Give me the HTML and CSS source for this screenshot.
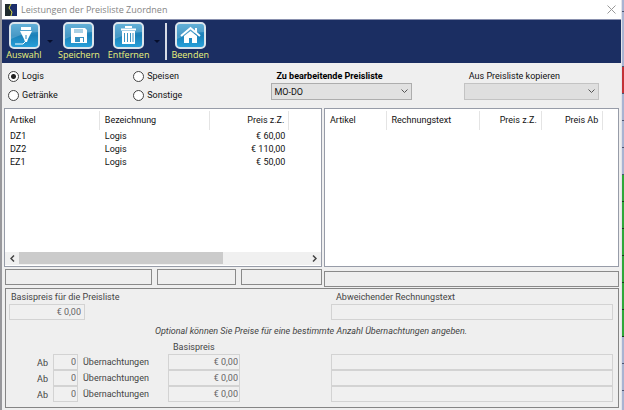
FILE: index.html
```html
<!DOCTYPE html>
<html lang="de">
<head>
<meta charset="utf-8">
<title>Leistungen der Preisliste Zuordnen</title>
<link rel="stylesheet" href="styles.css">
</head>
<body>
<svg class="defs" width="0" height="0" aria-hidden="true">
  <defs>
    <linearGradient id="tile" x1="0" y1="0" x2="0" y2="1">
      <stop offset="0" stop-color="#3f9fd0"/>
      <stop offset="0.5" stop-color="#1b80b8"/>
      <stop offset="1" stop-color="#28a3dc"/>
    </linearGradient>
    <g id="tile-base">
      <rect x="1" y="1" width="29" height="25" rx="4" fill="url(#tile)"/>
      <path d="M2 17V5Q2 2 5 2H26Q29 2 29 5V10Q14 11 2 17Z" fill="#fff" opacity="0.2"/>
      <rect x="1" y="1" width="29" height="25" rx="4" fill="none" stroke="#dbe5ec" stroke-width="2"/>
    </g>
  </defs>
</svg>
<div class="screen">
  <main class="window">
    <header class="titlebar">
      <svg class="app-icon" width="12" height="12" viewBox="0 0 12 12" aria-hidden="true">
        <rect width="12" height="12" fill="#1d2f6b"/>
        <path d="M0 0H6L4 4L7 8L6 12H0Z" fill="#202b2e"/>
        <path d="M6 0L4 4L7 8L6 12" fill="none" stroke="#d6d94b"/>
      </svg>
      <h1>Leistungen der Preisliste Zuordnen</h1>
      <button class="close" type="button" aria-label="Schließen">
        <svg width="9" height="9" viewBox="0 0 9 9"><path d="M0.5 0.5L8.5 8.5M8.5 0.5L0.5 8.5" stroke="#999" fill="none"/></svg>
      </button>
    </header>

    <nav class="toolbar">
      <button class="tool" type="button">
        <svg width="31" height="27" viewBox="0 0 31 27"><use href="#tile-base"/><path d="M12 5H22V8H12ZM11 9H23L19 17L18 20H16L15 17Z" fill="#fff"/><path d="M17 13V17" stroke="#2784b8"/><path d="M6 22H14L16 20" stroke="#fff" fill="none"/></svg>
        <span>Auswahl</span>
      </button>
      <i class="drop"></i>
      <button class="tool" type="button">
        <svg width="31" height="27" viewBox="0 0 31 27"><use href="#tile-base"/><path d="M8 6H22L24 8V21H8Z" fill="#fff"/><path d="M11 7H20V11H11Z" fill="#a9d0e4"/><path d="M12 15H21V20H12Z" fill="#3992c2"/><path d="M17 16H20V20H17Z" fill="#fff"/></svg>
        <span>Speichern</span>
      </button>
      <button class="tool" type="button">
        <svg width="31" height="27" viewBox="0 0 31 27"><use href="#tile-base"/><path d="M8 7.500H23M13 6V5H18V6" stroke="#fff" stroke-width="2" fill="none"/><path d="M9 9H22V22H9Z" fill="#fff"/><path d="M11.500 11V20M14.500 11V20M17.500 11V20M20 11V20" stroke="#3992c2"/></svg>
        <span>Entfernen</span>
      </button>
      <i class="drop"></i>
      <i class="divider"></i>
      <button class="tool" type="button">
        <svg width="31" height="27" viewBox="0 0 31 27"><use href="#tile-base"/><path d="M6 14L15.500 6L25 14" stroke="#fff" stroke-width="2" fill="none"/><path d="M20 6H22V11L20 9Z" fill="#fff"/><path d="M9 14L15.500 9L22 14V21H17V16H14V21H9Z" fill="#fff"/></svg>
        <span>Beenden</span>
      </button>
    </nav>

    <section class="options">
      <div class="radios">
        <label><input type="radio" name="art" checked>Logis</label>
        <label><input type="radio" name="art">Speisen</label>
        <label><input type="radio" name="art">Getränke</label>
        <label><input type="radio" name="art">Sonstige</label>
      </div>
      <div class="choice">
        <label class="strong" for="edit-list">Zu bearbeitende Preisliste</label>
        <select id="edit-list"><option>MO-DO</option></select>
      </div>
      <div class="choice">
        <label for="copy-list">Aus Preisliste kopieren</label>
        <select id="copy-list"><option></option></select>
      </div>
    </section>

    <section class="lists">
      <div class="column">
        <div class="list">
          <table>
            <colgroup><col class="w-30"><col class="w-35"><col class="w-25"><col></colgroup>
            <thead><tr><th>Artikel</th><th>Bezeichnung</th><th class="num">Preis z.Z.</th><th></th></tr></thead>
            <tbody>
              <tr><td>DZ1</td><td>Logis</td><td class="num">€ 60,00</td><td></td></tr>
              <tr><td>DZ2</td><td>Logis</td><td class="num">€ 110,00</td><td></td></tr>
              <tr><td>EZ1</td><td>Logis</td><td class="num">€ 50,00</td><td></td></tr>
            </tbody>
          </table>
          <div class="scrollbar">
            <button type="button" aria-label="Nach links"><svg width="5" height="7" viewBox="0 0 5 7"><path d="M4 0.500L1 3.500L4 6.500" fill="none" stroke="#444" stroke-width="1.500"/></svg></button>
            <div class="track"><div class="thumb"></div></div>
            <button type="button" aria-label="Nach rechts"><svg width="5" height="7" viewBox="0 0 5 7"><path d="M1 0.500L4 3.500L1 6.500" fill="none" stroke="#444" stroke-width="1.500"/></svg></button>
          </div>
        </div>
        <div class="status"><div class="box"></div><div class="box"></div><div class="box"></div></div>
      </div>
      <div class="column">
        <div class="list">
          <table>
            <colgroup><col class="w-21"><col class="w-32"><col class="w-21"><col class="w-21"><col></colgroup>
            <thead><tr><th>Artikel</th><th>Rechnungstext</th><th class="num">Preis z.Z.</th><th class="num">Preis Ab</th><th></th></tr></thead>
          </table>
        </div>
        <div class="status low"><div class="box"></div></div>
      </div>
    </section>

    <section class="details">
      <div class="pair">
        <div class="field">
          <label for="base">Basispreis für die Preisliste</label>
          <input id="base" class="price" value="€ 0,00" disabled>
        </div>
        <div class="field">
          <label for="text">Abweichender Rechnungstext</label>
          <input id="text" disabled>
        </div>
      </div>
      <p class="hint">Optional können Sie Preise für eine bestimmte Anzahl Übernachtungen angeben.</p>
      <div class="caption">Basispreis</div>
      <div class="tier">
        <div class="terms"><label for="n1">Ab</label><input id="n1" class="count" value="0" disabled><span>Übernachtungen</span><input class="amount" aria-label="Basispreis 1" value="€ 0,00" disabled></div>
        <input aria-label="Rechnungstext 1" disabled>
      </div>
      <div class="tier">
        <div class="terms"><label for="n2">Ab</label><input id="n2" class="count" value="0" disabled><span>Übernachtungen</span><input class="amount" aria-label="Basispreis 2" value="€ 0,00" disabled></div>
        <input aria-label="Rechnungstext 2" disabled>
      </div>
      <div class="tier">
        <div class="terms"><label for="n3">Ab</label><input id="n3" class="count" value="0" disabled><span>Übernachtungen</span><input class="amount" aria-label="Basispreis 3" value="€ 0,00" disabled></div>
        <input aria-label="Rechnungstext 3" disabled>
      </div>
    </section>
  </main>
  <aside class="backdrop" aria-hidden="true">
    <i></i><i></i><i class="red"></i><i></i><i></i><i></i>
    <i class="green"></i><i class="green"></i><i class="green"></i><i class="green"></i><i class="green"></i><i class="green"></i>
    <i></i><i></i><i></i>
  </aside>
</div>
</body>
</html>
```
FILE: styles.css
```css
* { box-sizing: border-box; }

body {
  margin: 0;
  background: #efefef;
  color: #111;
  font: 9px/12px Roboto, Arial, sans-serif;
}

button, input, select { font: inherit; color: inherit; margin: 0; }
button { border: 0; padding: 0; background: none; }
.defs { position: absolute; }

.screen { display: flex; min-height: 100vh; border-left: 2px solid #98989c; }
.window { flex: 1; min-width: 0; border-right: 1px solid #e4e4ea; }

.titlebar { display: flex; align-items: center; gap: 4px; height: 19px; padding: 0 5px 0 3px; background: #fff; }
.titlebar h1 { flex: 1; margin: 0; font: 9px/12px "Open Sans", sans-serif; color: #858585; }
.close { display: flex; }

.toolbar {
  display: flex;
  align-items: flex-start;
  height: 44px;
  padding: 2px 4px 0;
  border-top: 1px solid #8990ae;
  background: #1b2e62;
}
.tool {
  display: flex;
  flex-direction: column;
  align-items: center;
  min-width: 36px;
  color: #eaf27c;
  font: 9px/12px "Open Sans", sans-serif;
}
.drop { margin: 18px 5px 0; border: 3px solid transparent; border-top-color: #060e2c; border-bottom: 0; }
.tool + .tool { margin-left: 8px; }
.divider { width: 2px; height: 37px; margin: 1px 4px 0 0; background: #d7dbe6; }

.options {
  display: grid;
  grid-template-columns: 263fr 192fr 155fr;
  padding: 7px 2px 7px 6px;
}
.radios { display: grid; grid-template-columns: 125fr 138fr; row-gap: 7px; align-content: start; }
.radios label { display: flex; align-items: center; gap: 3px; }
.radios input {
  appearance: none;
  width: 11px;
  height: 11px;
  border: 1px solid #444;
  border-radius: 50%;
  background: #fff;
}
.radios input:checked { background: radial-gradient(#222 0 2px, #fff 3px); }
.choice { display: flex; flex-direction: column; gap: 1px; }
.choice label { padding-left: 5px; }
.strong { font-weight: bold; color: #000; }
.choice select {
  appearance: none;
  width: 73%;
  height: 17px;
  padding: 0 2px;
  border: 1px solid #adadad;
  border-radius: 0;
  background: #e1e1e1 url("data:image/svg+xml,%3Csvg xmlns='http://www.w3.org/2000/svg' width='7' height='5'%3E%3Cpath d='M0.500 0.500L3.500 3.500L6.500 0.500' fill='none' stroke='%23555'/%3E%3C/svg%3E") no-repeat right 3px center;
}
.choice:last-child select { width: 87%; border-color: #c3c3c3; background-color: #dfdfdf; }

.lists { display: grid; grid-template-columns: 318fr 295fr; gap: 2px; padding: 0 2px; }
.column { min-width: 0; }
.list {
  display: flex;
  flex-direction: column;
  justify-content: space-between;
  height: 159px;
  padding: 2px 0 1px;
  border: 1px solid #979ca8;
  background: #fff;
}
table { width: 100%; table-layout: fixed; border-collapse: separate; border-spacing: 0; }
.w-30 { width: 30%; }
.w-35 { width: 35%; }
.w-25 { width: 25%; }
.w-21 { width: 21%; }
.w-32 { width: 32%; }
th, td { height: 13px; padding: 0 5px; font-weight: normal; text-align: left; white-space: nowrap; line-height: 13px; }
th { height: 19px; border-right: 1px solid #e4e4e4; }
th:last-child { border-right: 0; }
th.num, td.num { padding: 0 4px 0 0; text-align: right; }

.scrollbar { display: flex; height: 13px; background: #f0f0f0; }
.scrollbar button { display: flex; align-items: center; justify-content: center; width: 14px; }
.track { flex: 1; }
.thumb { width: 71%; height: 12px; background: #cbcbcb; }

.status { display: grid; grid-template-columns: 147fr 79fr 81fr; gap: 5px; padding: 2px 0 0 1px; }
.status.low { grid-template-columns: 1fr; padding: 4px 0 0; }
.box { height: 16px; border: 1px solid #8a8a8a; }

.details {
  margin: 1px 2px 0 3px;
  padding: 2px 5px 5px 3px;
  border: 1px solid #858585;
  color: #444;
}
.details input {
  width: 100%;
  height: 16px;
  padding: 0 3px;
  border: 1px solid #d3d3d3;
  background: #f0f0f0;
  color: #666;
}
.pair, .tier { display: grid; grid-template-columns: 322fr 282fr; }
.field label { display: block; padding: 0 2px 1px; }
.field + .field label { padding-left: 5px; }
.details .price { display: block; width: 76px; text-align: right; }
.hint { margin: 5px 0 4px; text-align: center; font-style: italic; }
.caption { padding-left: 164px; line-height: 13px; }
.terms { display: grid; grid-template-columns: 44px 25px 90px 72px; align-items: center; }
.terms label { padding: 2px 5px 0 0; text-align: right; }
.terms span { padding-left: 5px; }
.details .count, .details .amount { padding: 0 1px; text-align: right; }

.backdrop { width: 2px; }
.backdrop i { display: block; height: 27px; border-bottom: 1px solid #4c5470; background: #a9b4d2; }
.backdrop i:first-child { height: 12px; }
.backdrop i:nth-child(2) { height: 55px; }
.backdrop .red { background: #c33137; }
.backdrop .green { border-color: #163c1c; background: #2fa83a; }
```
